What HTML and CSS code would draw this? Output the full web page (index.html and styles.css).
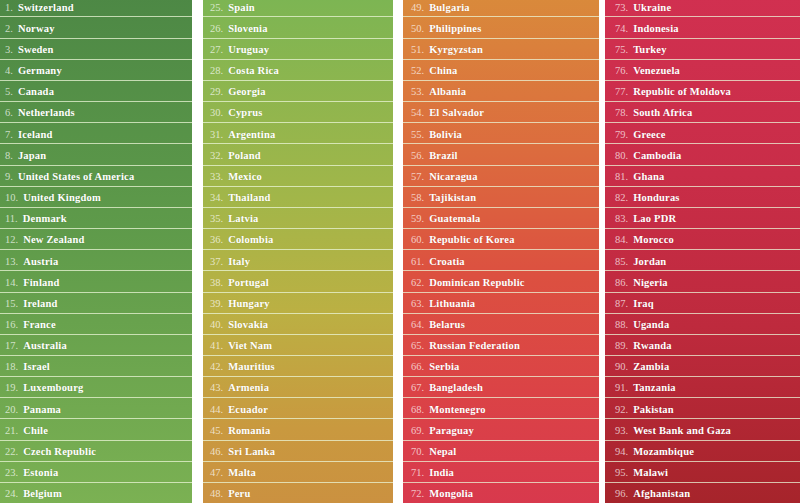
FILE: index.html
```html
<!DOCTYPE html>
<html>
<head>
<meta charset="utf-8">
<link rel="stylesheet" href="styles.css">
</head>
<body>
<div class="board">
  <ol class="col c1">
    <li><span class="n">1.</span><span class="c">Switzerland</span></li>
    <li><span class="n">2.</span><span class="c">Norway</span></li>
    <li><span class="n">3.</span><span class="c">Sweden</span></li>
    <li><span class="n">4.</span><span class="c">Germany</span></li>
    <li><span class="n">5.</span><span class="c">Canada</span></li>
    <li><span class="n">6.</span><span class="c">Netherlands</span></li>
    <li><span class="n">7.</span><span class="c">Iceland</span></li>
    <li><span class="n">8.</span><span class="c">Japan</span></li>
    <li><span class="n">9.</span><span class="c">United States of America</span></li>
    <li><span class="n">10.</span><span class="c">United Kingdom</span></li>
    <li><span class="n">11.</span><span class="c">Denmark</span></li>
    <li><span class="n">12.</span><span class="c">New Zealand</span></li>
    <li><span class="n">13.</span><span class="c">Austria</span></li>
    <li><span class="n">14.</span><span class="c">Finland</span></li>
    <li><span class="n">15.</span><span class="c">Ireland</span></li>
    <li><span class="n">16.</span><span class="c">France</span></li>
    <li><span class="n">17.</span><span class="c">Australia</span></li>
    <li><span class="n">18.</span><span class="c">Israel</span></li>
    <li><span class="n">19.</span><span class="c">Luxembourg</span></li>
    <li><span class="n">20.</span><span class="c">Panama</span></li>
    <li><span class="n">21.</span><span class="c">Chile</span></li>
    <li><span class="n">22.</span><span class="c">Czech Republic</span></li>
    <li><span class="n">23.</span><span class="c">Estonia</span></li>
    <li><span class="n">24.</span><span class="c">Belgium</span></li>
  </ol>
  <ol class="col c2">
    <li><span class="n">25.</span><span class="c">Spain</span></li>
    <li><span class="n">26.</span><span class="c">Slovenia</span></li>
    <li><span class="n">27.</span><span class="c">Uruguay</span></li>
    <li><span class="n">28.</span><span class="c">Costa Rica</span></li>
    <li><span class="n">29.</span><span class="c">Georgia</span></li>
    <li><span class="n">30.</span><span class="c">Cyprus</span></li>
    <li><span class="n">31.</span><span class="c">Argentina</span></li>
    <li><span class="n">32.</span><span class="c">Poland</span></li>
    <li><span class="n">33.</span><span class="c">Mexico</span></li>
    <li><span class="n">34.</span><span class="c">Thailand</span></li>
    <li><span class="n">35.</span><span class="c">Latvia</span></li>
    <li><span class="n">36.</span><span class="c">Colombia</span></li>
    <li><span class="n">37.</span><span class="c">Italy</span></li>
    <li><span class="n">38.</span><span class="c">Portugal</span></li>
    <li><span class="n">39.</span><span class="c">Hungary</span></li>
    <li><span class="n">40.</span><span class="c">Slovakia</span></li>
    <li><span class="n">41.</span><span class="c">Viet Nam</span></li>
    <li><span class="n">42.</span><span class="c">Mauritius</span></li>
    <li><span class="n">43.</span><span class="c">Armenia</span></li>
    <li><span class="n">44.</span><span class="c">Ecuador</span></li>
    <li><span class="n">45.</span><span class="c">Romania</span></li>
    <li><span class="n">46.</span><span class="c">Sri Lanka</span></li>
    <li><span class="n">47.</span><span class="c">Malta</span></li>
    <li><span class="n">48.</span><span class="c">Peru</span></li>
  </ol>
  <ol class="col c3">
    <li><span class="n">49.</span><span class="c">Bulgaria</span></li>
    <li><span class="n">50.</span><span class="c">Philippines</span></li>
    <li><span class="n">51.</span><span class="c">Kyrgyzstan</span></li>
    <li><span class="n">52.</span><span class="c">China</span></li>
    <li><span class="n">53.</span><span class="c">Albania</span></li>
    <li><span class="n">54.</span><span class="c">El Salvador</span></li>
    <li><span class="n">55.</span><span class="c">Bolivia</span></li>
    <li><span class="n">56.</span><span class="c">Brazil</span></li>
    <li><span class="n">57.</span><span class="c">Nicaragua</span></li>
    <li><span class="n">58.</span><span class="c">Tajikistan</span></li>
    <li><span class="n">59.</span><span class="c">Guatemala</span></li>
    <li><span class="n">60.</span><span class="c">Republic of Korea</span></li>
    <li><span class="n">61.</span><span class="c">Croatia</span></li>
    <li><span class="n">62.</span><span class="c">Dominican Republic</span></li>
    <li><span class="n">63.</span><span class="c">Lithuania</span></li>
    <li><span class="n">64.</span><span class="c">Belarus</span></li>
    <li><span class="n">65.</span><span class="c">Russian Federation</span></li>
    <li><span class="n">66.</span><span class="c">Serbia</span></li>
    <li><span class="n">67.</span><span class="c">Bangladesh</span></li>
    <li><span class="n">68.</span><span class="c">Montenegro</span></li>
    <li><span class="n">69.</span><span class="c">Paraguay</span></li>
    <li><span class="n">70.</span><span class="c">Nepal</span></li>
    <li><span class="n">71.</span><span class="c">India</span></li>
    <li><span class="n">72.</span><span class="c">Mongolia</span></li>
  </ol>
  <ol class="col c4">
    <li><span class="n">73.</span><span class="c">Ukraine</span></li>
    <li><span class="n">74.</span><span class="c">Indonesia</span></li>
    <li><span class="n">75.</span><span class="c">Turkey</span></li>
    <li><span class="n">76.</span><span class="c">Venezuela</span></li>
    <li><span class="n">77.</span><span class="c">Republic of Moldova</span></li>
    <li><span class="n">78.</span><span class="c">South Africa</span></li>
    <li><span class="n">79.</span><span class="c">Greece</span></li>
    <li><span class="n">80.</span><span class="c">Cambodia</span></li>
    <li><span class="n">81.</span><span class="c">Ghana</span></li>
    <li><span class="n">82.</span><span class="c">Honduras</span></li>
    <li><span class="n">83.</span><span class="c">Lao PDR</span></li>
    <li><span class="n">84.</span><span class="c">Morocco</span></li>
    <li><span class="n">85.</span><span class="c">Jordan</span></li>
    <li><span class="n">86.</span><span class="c">Nigeria</span></li>
    <li><span class="n">87.</span><span class="c">Iraq</span></li>
    <li><span class="n">88.</span><span class="c">Uganda</span></li>
    <li><span class="n">89.</span><span class="c">Rwanda</span></li>
    <li><span class="n">90.</span><span class="c">Zambia</span></li>
    <li><span class="n">91.</span><span class="c">Tanzania</span></li>
    <li><span class="n">92.</span><span class="c">Pakistan</span></li>
    <li><span class="n">93.</span><span class="c">West Bank and Gaza</span></li>
    <li><span class="n">94.</span><span class="c">Mozambique</span></li>
    <li><span class="n">95.</span><span class="c">Malawi</span></li>
    <li><span class="n">96.</span><span class="c">Afghanistan</span></li>
  </ol>
</div>
</body>
</html>
```
FILE: styles.css
```css
html, body {
  margin: 0;
  padding: 0;
  background: #ffffff;
  overflow: hidden;
}
.board {
  display: flex;
  width: 800px;
  margin-top: -3.7px;
  font-family: "Liberation Serif", "DejaVu Serif", serif;
  font-size: 10.5px;
}
.col {
  list-style: none;
  margin: 0;
  padding: 0;
  display: flex;
  flex-direction: column;
}
.col li {
  box-sizing: border-box;
  height: 21.16px;
  padding-top: 1.5px;
  border-bottom: 1.2px solid rgba(235, 245, 215, 0.75);
  display: flex;
  align-items: center;
  white-space: nowrap;
  color: #fff;
}
.n {
  color: rgba(255, 255, 255, 0.7);
  margin-right: 5px;
}
.c {
  font-weight: bold;
  letter-spacing: 0.2px;
  text-shadow: 0 0 1px rgba(0, 0, 0, 0.15);
}
.c1 {
  width: 192px;
  background: linear-gradient(#4d8845, #5e9a4a 45%, #7bb153);
}
.c1 li { padding-left: 5px; }
.c2 {
  width: 190px;
  margin-left: 11px;
  background: linear-gradient(#7cb553, #a2b649 40%, #bbb043 62%, #c9993f 85%, #cb9140);
}
.c2 li { padding-left: 7px; }
.c3 {
  width: 196px;
  margin-left: 10px;
  background: linear-gradient(#d98a3b, #dc6c3e 30%, #dc5040 55%, #db4346 78%, #d8394d);
}
.c3 li { padding-left: 8px; }
.c4 {
  width: 195px;
  margin-left: 6px;
  background: linear-gradient(#d13050, #c92d48 35%, #be2a3d 65%, #a6242b);
}
.c4 li { padding-left: 10px; }
```
